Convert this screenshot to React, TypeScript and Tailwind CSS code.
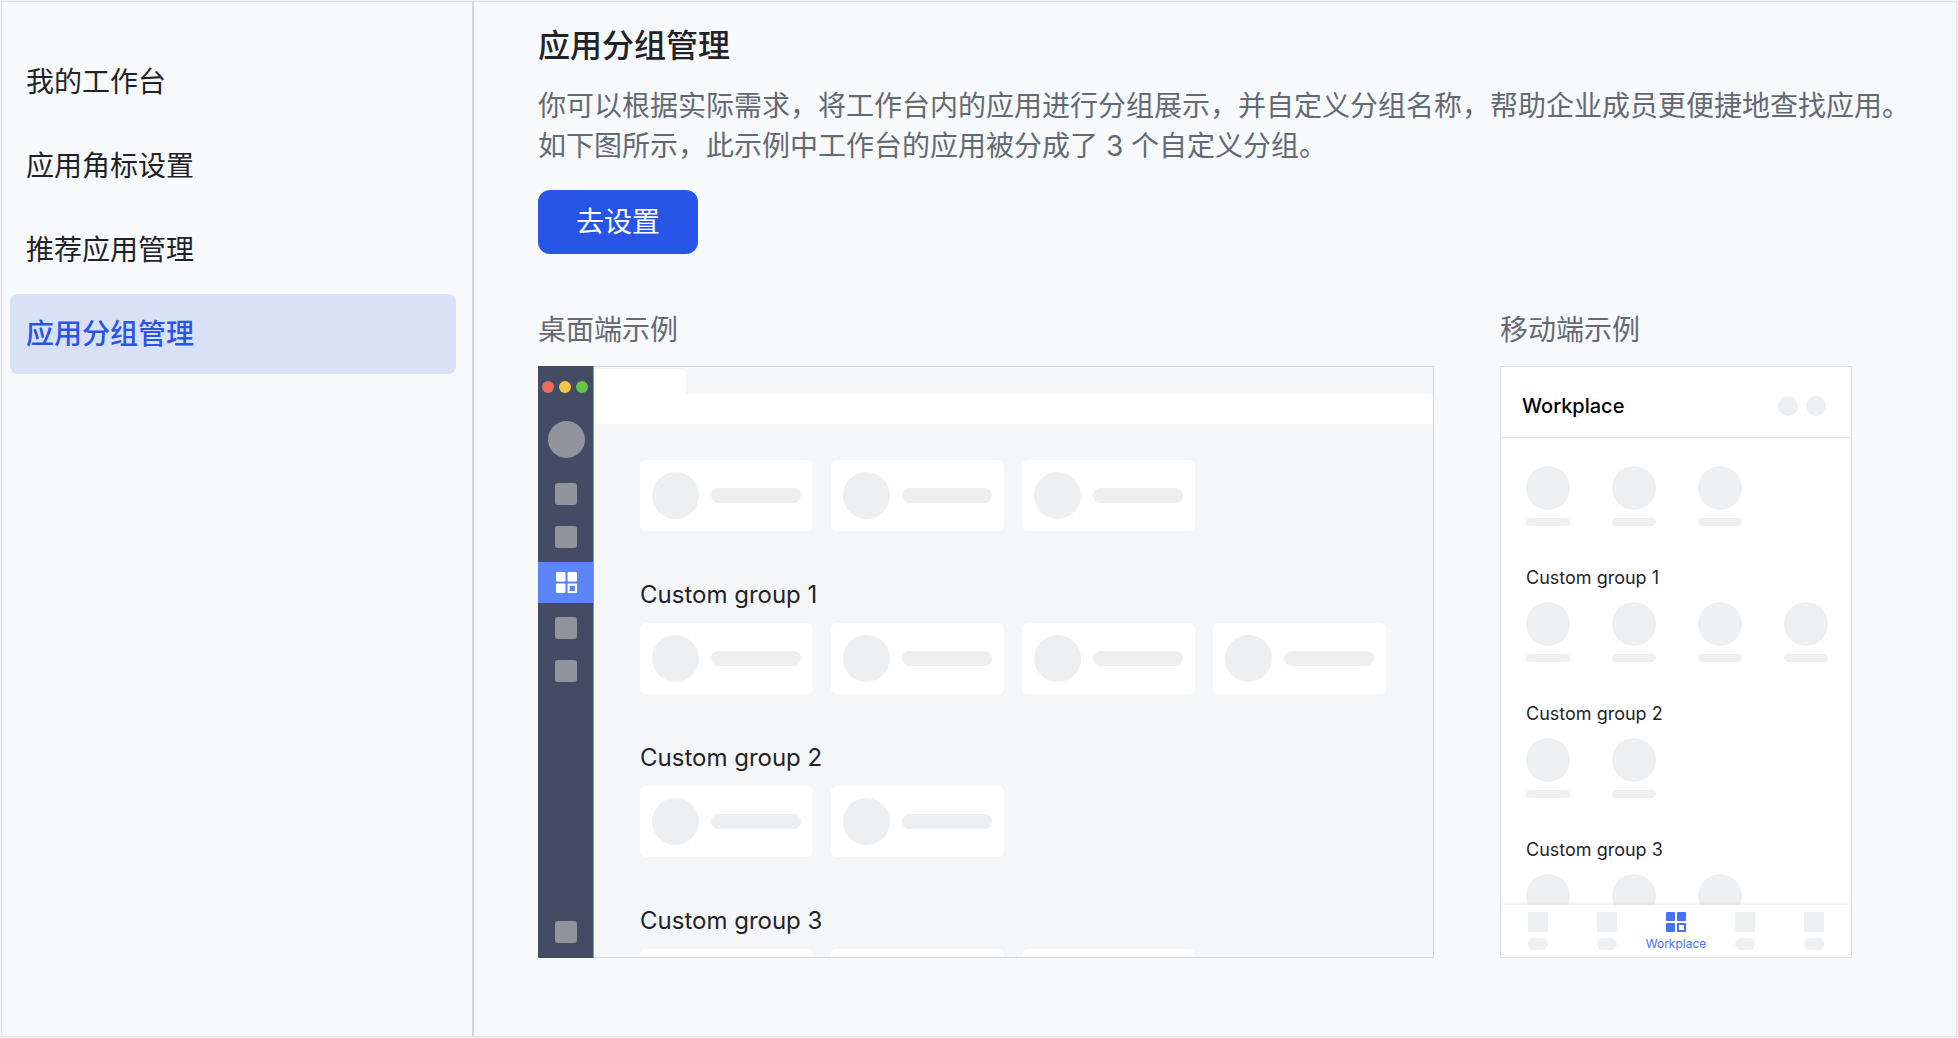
import clsx from "clsx";

const menuItems = [
  { label: "我的工作台", active: false },
  { label: "应用角标设置", active: false },
  { label: "推荐应用管理", active: false },
  { label: "应用分组管理", active: true },
];

const groups = [
  { title: "", count: 3 },
  { title: "Custom group 1", count: 4 },
  { title: "Custom group 2", count: 2 },
  { title: "Custom group 3", count: 3 },
];

const range = (n: number) => Array.from({ length: n }, (_, i) => i);

function WorkplaceIcon({ className }: { className?: string }) {
  return (
    <svg className={className} viewBox="0 0 20 20" fill="currentColor" aria-hidden="true">
      <rect x="0" y="0" width="9" height="9" rx="1" />
      <rect x="11" y="0" width="9" height="9" rx="1" />
      <rect x="0" y="11" width="9" height="9" rx="1" />
      <path fillRule="evenodd" d="M12 11h7a1 1 0 011 1v7a1 1 0 01-1 1h-7a1 1 0 01-1-1v-7a1 1 0 011-1zm1 2v5h5v-5z" />
    </svg>
  );
}

function NavSquare({ className }: { className?: string }) {
  return <div className={clsx("ml-[17px] h-[22px] w-[22px] shrink-0 rounded-[3px] bg-[#8f949d]", className)} />;
}

function DesktopPreview() {
  return (
    <div className="flex h-[592px] w-full overflow-hidden">
      {/* Left rail */}
      <div className="flex w-14 shrink-0 flex-col border-r border-[#8f959e] bg-[#444b64] pt-[15px] pb-[15px]">
        <div className="flex gap-[5px] pl-1">
          <div className="h-3 w-3 rounded-full bg-[#ee6a5f]" />
          <div className="h-3 w-3 rounded-full bg-[#f8c644]" />
          <div className="h-3 w-3 rounded-full bg-[#66c544]" />
        </div>
        <div className="mt-7 ml-[10px] h-[37px] w-[37px] shrink-0 rounded-full bg-[#8f949d]" />
        <NavSquare className="mt-[25px]" />
        <NavSquare className="mt-[21px]" />
        <div className="mt-[14px] flex h-[41px] shrink-0 items-center bg-[#5b85f8] pl-[18px] text-white">
          <WorkplaceIcon className="h-[21px] w-[21px]" />
        </div>
        <NavSquare className="mt-[14px]" />
        <NavSquare className="mt-[21px]" />
        <NavSquare className="mt-auto" />
      </div>

      {/* Window content */}
      <div className="flex min-w-0 flex-1 flex-col overflow-hidden border-y border-r border-[#d2d4d7] bg-[#f5f6f8]">
        <div className="mt-0.5 h-[25px] w-[92px] shrink-0 rounded-tr-md bg-white" />
        <div className="h-[30px] shrink-0 bg-white" />
        <div className="pt-9 pl-[46px]">
          {groups.map((g, i) => (
            <div key={i}>
              {g.title && (
                <h3 className="mt-12 mb-3 text-2xl leading-8 text-[#1f2329]">{g.title}</h3>
              )}
              <div className="flex gap-[18px]">
                {range(g.count).map((n) => (
                  <div key={n} className="flex h-[71px] w-[173px] shrink-0 items-center gap-3 rounded-md bg-white px-3">
                    <div className="h-[47px] w-[47px] shrink-0 rounded-full bg-[#eeeff1]" />
                    <div className="h-[15px] flex-1 rounded-full bg-[#eeeff1]" />
                  </div>
                ))}
              </div>
            </div>
          ))}
        </div>
      </div>
    </div>
  );
}

function TabPlaceholder() {
  return (
    <div className="flex w-5 flex-col gap-1.5">
      <div className="h-5 bg-[#eeeff1]" />
      <div className="h-3 rounded-full bg-[#eeeff1]" />
    </div>
  );
}

function MobilePreview() {
  return (
    <div className="flex h-[592px] w-[352px] flex-col overflow-hidden border border-[#dee0e3] bg-white">
      <div className="flex h-[71px] shrink-0 items-center border-b border-[#dee0e3] pt-2 pr-[25px] pl-[21px]">
        <h3 className="flex-1 text-xl font-medium text-black">Workplace</h3>
        <div className="flex gap-2">
          <div className="h-5 w-5 rounded-full bg-[#eeeff1]" />
          <div className="h-5 w-5 rounded-full bg-[#eeeff1]" />
        </div>
      </div>

      <div className="min-h-0 flex-1 overflow-hidden pt-7 pl-[25px]">
        {groups.map((g, i) => (
          <div key={i}>
            {g.title && <h4 className="mt-10 mb-3 text-lg leading-6 text-[#1f2329]">{g.title}</h4>}
            <div className="flex gap-[42px]">
              {range(g.count).map((n) => (
                <div key={n} className="flex shrink-0 flex-col gap-2">
                  <div className="h-11 w-11 rounded-full bg-[#eeeff1]" />
                  <div className="h-2 rounded-full bg-[#eeeff1]" />
                </div>
              ))}
            </div>
          </div>
        ))}
      </div>

      <div className="relative flex h-[52px] shrink-0 justify-between bg-white px-[27px] pt-[7px] shadow-[0_-2px_2px_rgba(31,35,41,0.06)]">
        <TabPlaceholder />
        <TabPlaceholder />
        <div className="flex w-5 flex-col items-center gap-1.5 text-[#4571f7]">
          <WorkplaceIcon className="h-5 w-5 shrink-0" />
          <span className="text-xs leading-3 whitespace-nowrap">Workplace</span>
        </div>
        <TabPlaceholder />
        <TabPlaceholder />
      </div>
    </div>
  );
}

export default function App() {
  return (
    <div className="flex min-h-screen bg-[#f4f5f6] p-px font-['Inter','Noto_Sans_CJK_SC',sans-serif] text-[28px] leading-10">
      <div className="flex flex-1 border border-[#dee0e3] bg-[#f8f9fb]">
        {/* Side menu */}
        <nav className="flex w-[472px] shrink-0 flex-col gap-1 border-r-2 border-[#d6d8db] pt-10 pr-4 pl-2">
          {menuItems.map((item) => (
            <a
              key={item.label}
              href="#"
              className={clsx(
                "flex h-20 items-center rounded-lg px-4",
                item.active ? "bg-[#d9e1f6] font-medium text-[#2954e9]" : "text-[#1f2329]"
              )}
            >
              {item.label}
            </a>
          ))}
        </nav>

        {/* Main */}
        <main className="min-w-0 flex-1 pt-5 pl-16 text-[#646a73]">
          <h1 className="mb-4 text-[32px] leading-[48px] font-medium text-[#1f2329]">应用分组管理</h1>
          <p>
            你可以根据实际需求，将工作台内的应用进行分组展示，并自定义分组名称，帮助企业成员更便捷地查找应用。
            <br />
            如下图所示，此示例中工作台的应用被分成了 3 个自定义分组。
          </p>
          <button className="mt-6 h-16 w-40 rounded-xl bg-[#2854e8] text-white">去设置</button>

          <div className="mt-14 flex gap-[66px]">
            <section className="w-[896px]">
              <h2 className="mb-4">桌面端示例</h2>
              <DesktopPreview />
            </section>
            <section className="shrink-0">
              <h2 className="mb-4">移动端示例</h2>
              <MobilePreview />
            </section>
          </div>
        </main>
      </div>
    </div>
  );
}
